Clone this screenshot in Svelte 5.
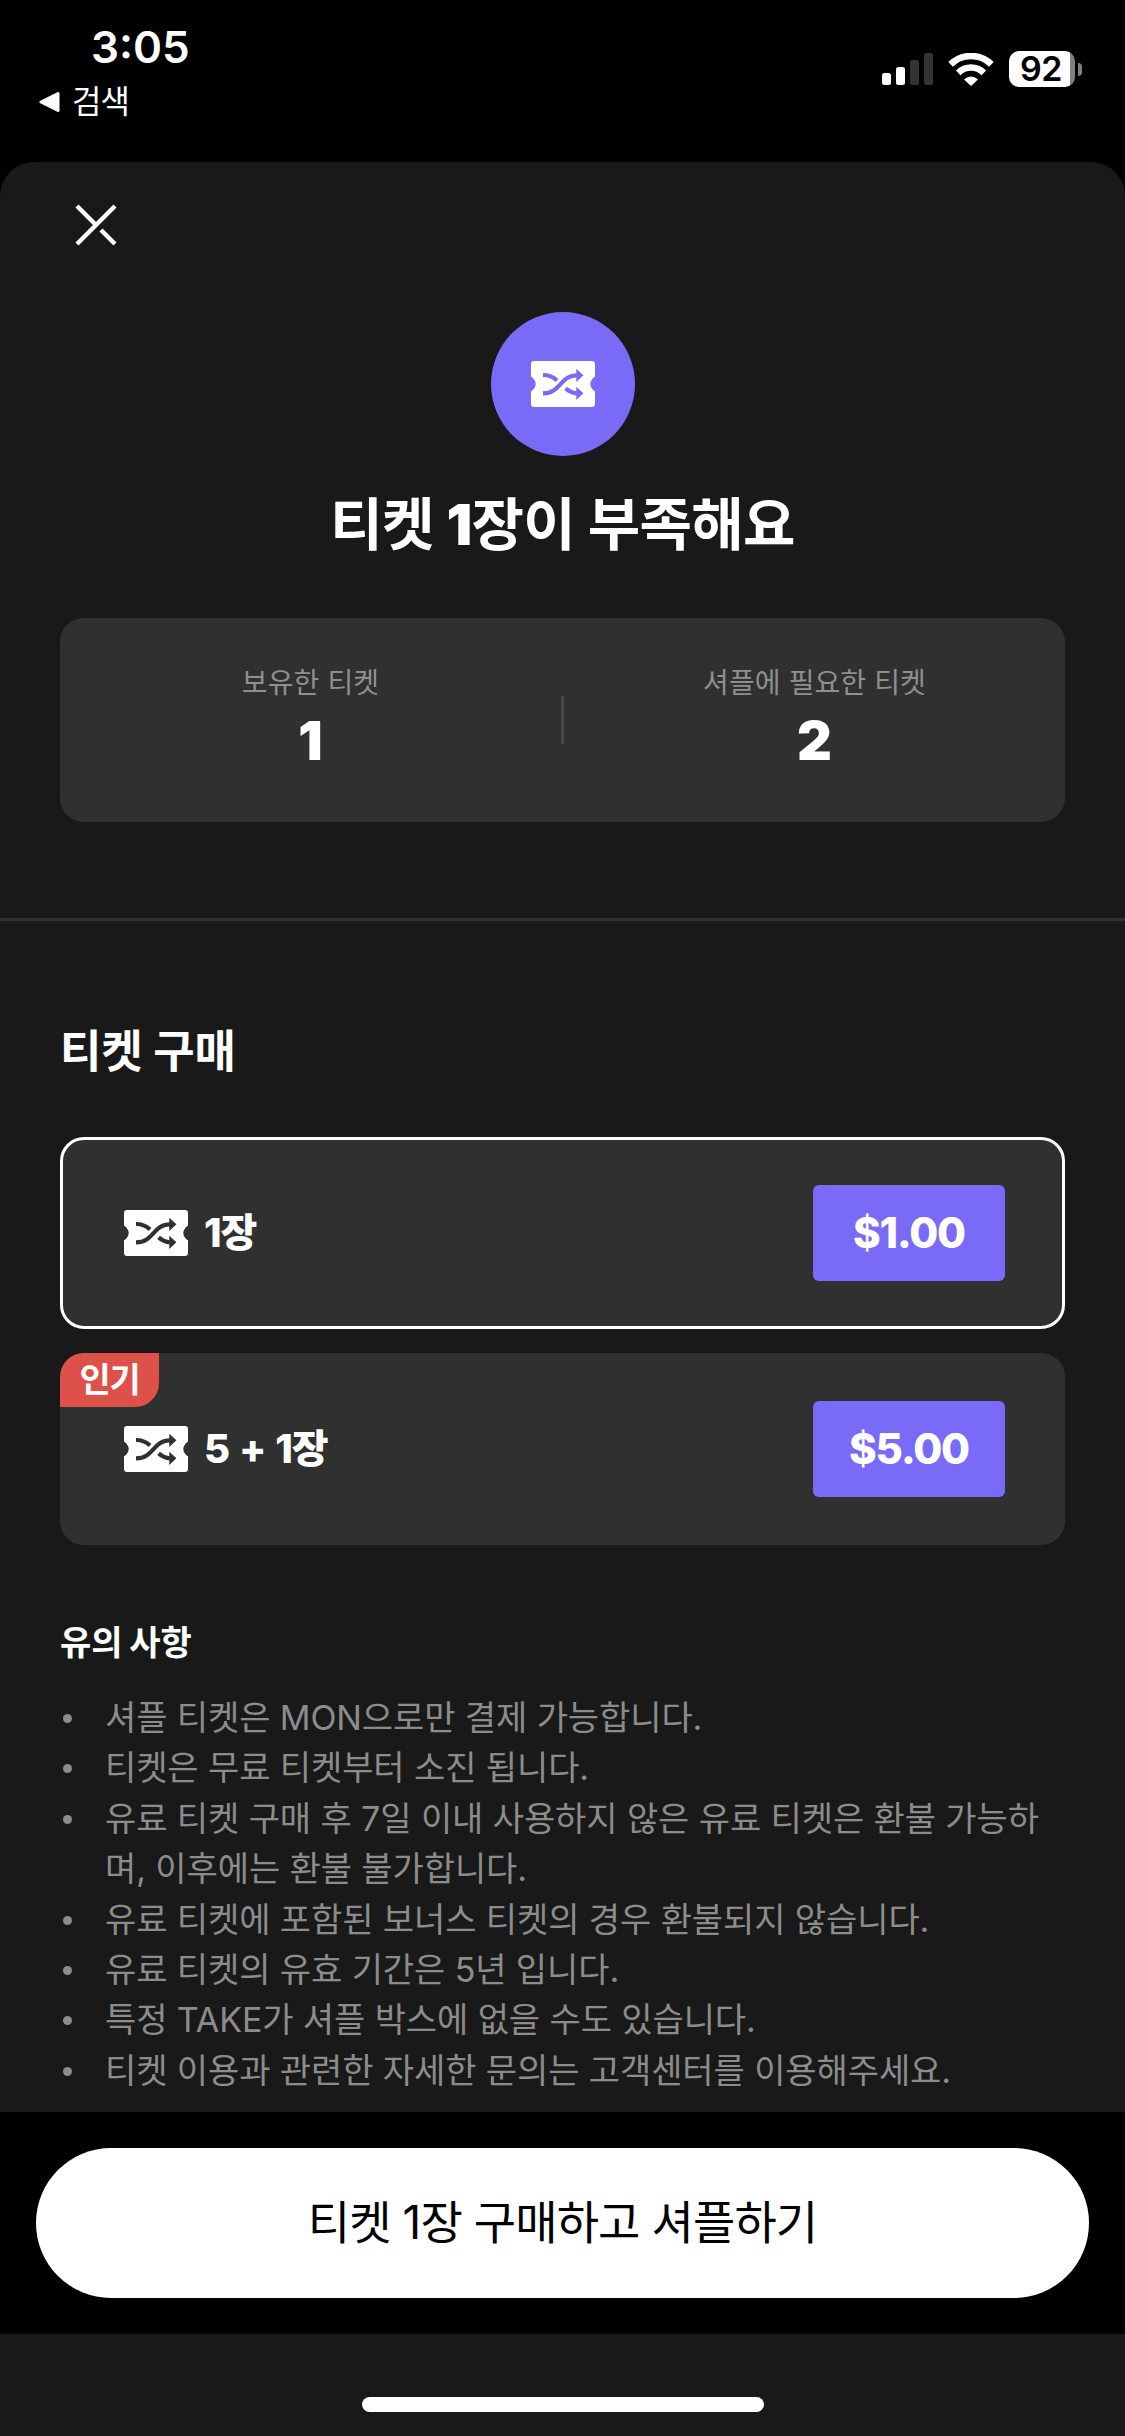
<script lang="ts">
	type Option = { id: number; label: string; price: string; popular?: boolean };

	const options: Option[] = [
		{ id: 1, label: '1장', price: '$1.00' },
		{ id: 2, label: '5 + 1장', price: '$5.00', popular: true }
	];

	const notices = [
		'셔플 티켓은 MON으로만 결제 가능합니다.',
		'티켓은 무료 티켓부터 소진 됩니다.',
		'유료 티켓 구매 후 7일 이내 사용하지 않은 유료 티켓은 환불 가능하며, 이후에는 환불 불가합니다.',
		'유료 티켓에 포함된 보너스 티켓의 경우 환불되지 않습니다.',
		'유료 티켓의 유효 기간은 5년 입니다.',
		'특정 TAKE가 셔플 박스에 없을 수도 있습니다.',
		'티켓 이용과 관련한 자세한 문의는 고객센터를 이용해주세요.'
	];

	let owned = $state(1);
	let required = $state(2);
	let selected = $state(1);
	let missing = $derived(required - owned);
	let selectedLabel = $derived(options.find((o) => o.id === selected)?.label ?? '');
</script>

{#snippet ticket()}
	<svg class="ticket" viewBox="0 0 64 46">
		<path
			class="ticket-body"
			d="M3 0H61Q64 0 64 3V15.5Q59.3 19 59.3 23T64 30.5V43Q64 46 61 46H3Q0 46 0 43V30.5Q4.7 27 4.7 23T0 15.5V3Q0 0 3 0Z"
		/>
		<path
			class="ticket-line"
			d="M12 14C18 14 22 15.8 26 19.4M12 32.3C30 32.3 29 14.3 46 14.3M34.6 27.4C38 30.4 41 32 46 32.4"
		/>
		<path class="ticket-arrow" d="M45.3 7.7L52.4 14.3L45.3 20.9ZM45.3 25.7L52.4 32.3L45.3 39Z" />
	</svg>
{/snippet}

<div class="screen">
	<header class="status">
		<div class="status-left">
			<div class="time">3:05</div>
			<div class="back">
				<svg width="21" height="22" viewBox="0 0 21 22">
					<path d="M2 11L19 2.5V19.5Z" fill="#fff" stroke="#fff" stroke-width="3" stroke-linejoin="round" />
				</svg>
				<span>검색</span>
			</div>
		</div>
		<div class="status-right">
			<svg width="51" height="32" viewBox="0 0 51 32">
				<rect x="0" y="20" width="9" height="12" rx="2.5" fill="#fff" />
				<rect x="14" y="14" width="9" height="18" rx="2.5" fill="#fff" />
				<rect x="28" y="7" width="9" height="25" rx="2.5" fill="#333" />
				<rect x="42" y="0" width="9" height="32" rx="2.5" fill="#333" />
			</svg>
			<svg class="wifi" width="46" height="33" viewBox="0 0 46 33">
				<path d="M2.6 11.4A29 29 0 0 1 43.4 11.4" />
				<path d="M10.2 19.8A18.2 18.2 0 0 1 35.8 19.8" />
				<path class="wifi-dot" d="M16 26.4Q23 20.6 30 26.4L23 33Z" />
			</svg>
			<div class="battery">
				<div class="battery-body">92</div>
				<div class="battery-cap"></div>
			</div>
		</div>
	</header>

	<main class="sheet">
		<button class="close" aria-label="닫기">
			<svg width="42" height="42" viewBox="0 0 42 42">
				<path d="M2 40L40 2M2 2L21 21M26 26L40 40" stroke="#fff" stroke-width="4.4" />
			</svg>
		</button>

		<section class="hero">
			<div class="hero-icon">{@render ticket()}</div>
			<h1>티켓 <b>{missing}</b>장이 부족해요</h1>
			<div class="summary">
				<div class="summary-item">
					<span class="summary-label">보유한 티켓</span>
					<span class="summary-count">{owned}</span>
				</div>
				<div class="summary-divider"></div>
				<div class="summary-item">
					<span class="summary-label">셔플에 필요한 티켓</span>
					<span class="summary-count">{required}</span>
				</div>
			</div>
		</section>

		<section class="purchase">
			<h2>티켓 구매</h2>
			<div class="options">
				{#each options as option (option.id)}
					<button
						class="option"
						class:selected={option.id === selected}
						onclick={() => (selected = option.id)}
					>
						{#if option.popular}
							<span class="badge">인기</span>
						{/if}
						{@render ticket()}
						<span class="option-label">{option.label}</span>
						<span class="price">{option.price}</span>
					</button>
				{/each}
			</div>
		</section>

		<section class="notice">
			<h3>유의 사항</h3>
			<ul>
				{#each notices as notice}
					<li>{notice}</li>
				{/each}
			</ul>
		</section>
	</main>

	<div class="cta-bar">
		<button class="cta">티켓 {selectedLabel} 구매하고 셔플하기</button>
	</div>
	<footer class="home">
		<div class="home-indicator"></div>
	</footer>
</div>

<style>
	:global(body) {
		margin: 0;
		background: #000;
	}

	.screen {
		width: 1125px;
		height: 2436px;
		display: flex;
		flex-direction: column;
		overflow: hidden;
		background: #000;
		color: #fff;
		font-family: Inter, 'Noto Sans CJK KR', sans-serif;
	}

	button {
		padding: 0;
		border: 0;
		background: none;
		color: inherit;
		font: inherit;
	}

	svg {
		display: block;
		flex: none;
	}

	h1,
	h2,
	h3,
	ul {
		margin: 0;
		padding: 0;
	}

	/* Status bar */
	.status {
		height: 162px;
		flex: none;
		box-sizing: border-box;
		padding: 20px 43px 0 39px;
		display: flex;
		justify-content: space-between;
		align-items: flex-start;
	}

	.time {
		padding-left: 52px;
		font-size: 44px;
		font-weight: 600;
		line-height: 54px;
	}

	.back {
		display: flex;
		align-items: center;
		gap: 12px;
		margin-top: 8px;
		font-size: 32px;
		line-height: 40px;
		letter-spacing: -1px;
	}

	.status-right {
		display: flex;
		align-items: center;
		margin-top: 31px;
	}

	.wifi {
		margin: 0 15px;
		fill: none;
		stroke: #fff;
		stroke-width: 6.6;
	}

	.wifi .wifi-dot {
		fill: #fff;
		stroke: none;
	}

	.battery {
		display: flex;
		align-items: center;
		gap: 3px;
	}

	.battery-body {
		width: 66px;
		height: 36px;
		box-sizing: border-box;
		padding-right: 2px;
		border-radius: 10px;
		background: linear-gradient(to right, #fff 61px, #808080 61px);
		color: #000;
		font-size: 34px;
		font-weight: 600;
		line-height: 36px;
		letter-spacing: -0.5px;
		text-align: center;
	}

	.battery-cap {
		width: 4px;
		height: 13px;
		border-radius: 0 6px 6px 0;
		background: #808080;
	}

	/* Sheet */
	.sheet {
		height: 1950px;
		flex: none;
		border-radius: 34px 34px 0 0;
		background: #191919;
		overflow: hidden;
	}

	.close {
		display: block;
		margin: 42px 0 0 75px;
	}

	.hero {
		display: flex;
		flex-direction: column;
		align-items: center;
		padding: 66px 60px 96px;
		border-bottom: 3px solid #303030;
	}

	.hero-icon {
		width: 144px;
		height: 144px;
		border-radius: 50%;
		background: #796af7;
		display: flex;
		align-items: center;
		justify-content: center;
		--cut: #796af7;
	}

	.ticket {
		width: 64px;
		height: 46px;
	}

	.ticket-body {
		fill: #fff;
	}

	.ticket-line {
		fill: none;
		stroke: var(--cut);
		stroke-width: 4.2;
	}

	.ticket-arrow {
		fill: var(--cut);
	}

	h1 {
		margin-top: 33px;
		font-size: 57px;
		font-weight: 700;
		line-height: 72px;
		letter-spacing: -0.7px;
	}

	h1 b {
		font-weight: 900;
	}

	.summary {
		width: 100%;
		height: 204px;
		margin-top: 57px;
		border-radius: 24px;
		background: #303030;
		display: flex;
		align-items: center;
	}

	.summary-item {
		flex: 1;
		display: flex;
		flex-direction: column;
		align-items: center;
		margin-top: -2px;
	}

	.summary-label {
		color: #8f8f8f;
		font-size: 28px;
		line-height: 44px;
		letter-spacing: 0.1px;
	}

	.summary-count {
		font-size: 54px;
		font-weight: 900;
		line-height: 72px;
	}

	.summary-divider {
		width: 3px;
		height: 48px;
		background: #474747;
	}

	/* Purchase options */
	.purchase {
		padding: 101px 60px 0;
	}

	h2 {
		font-size: 45px;
		font-weight: 700;
		line-height: 60px;
		letter-spacing: -0.1px;
	}

	.options {
		display: flex;
		flex-direction: column;
		gap: 24px;
		margin-top: 55px;
	}

	.option {
		position: relative;
		height: 192px;
		box-sizing: border-box;
		padding: 0 57px 0 61px;
		border: 3px solid #303030;
		border-radius: 24px;
		background: #303030;
		display: flex;
		align-items: center;
		--cut: #303030;
	}

	.option.selected {
		border-color: #fff;
	}

	.option-label {
		margin-left: 16px;
		font-size: 40px;
		font-weight: 800;
		line-height: 48px;
		letter-spacing: -1.2px;
		word-spacing: 2.5px;
	}

	.price {
		width: 192px;
		height: 96px;
		margin-left: auto;
		border-radius: 6px;
		background: #796af7;
		font-size: 42px;
		font-weight: 800;
		line-height: 95px;
		letter-spacing: -1.2px;
		text-align: center;
	}

	.badge {
		position: absolute;
		top: -3px;
		left: -3px;
		width: 99px;
		height: 54px;
		border-radius: 24px 0;
		background: #de504a;
		font-size: 34px;
		font-weight: 600;
		line-height: 54px;
		letter-spacing: -1.2px;
		text-align: center;
	}

	/* Notice */
	.notice {
		padding: 71px 60px 0;
	}

	h3 {
		font-size: 34px;
		font-weight: 700;
		line-height: 54px;
		letter-spacing: -0.1px;
		word-spacing: -1px;
	}

	ul {
		margin-top: 23px;
		list-style: none;
		color: #8c8c8c;
		font-size: 34px;
		line-height: 50.4px;
		letter-spacing: -0.1px;
		word-break: break-all;
	}

	li {
		display: flex;
	}

	li::before {
		content: '';
		flex: none;
		width: 9px;
		height: 9px;
		margin: 21px 33px 0 3px;
		border-radius: 50%;
		background: #8c8c8c;
	}

	/* Bottom */
	.cta-bar {
		height: 222px;
		flex: none;
		box-sizing: border-box;
		padding: 36px;
	}

	.cta {
		width: 100%;
		height: 150px;
		padding-bottom: 3px;
		border-radius: 75px;
		background: #fff;
		color: #000;
		font-size: 46px;
		line-height: 60px;
		letter-spacing: -0.9px;
	}

	.home {
		flex: 1;
		padding-top: 63px;
		background: #191919;
	}

	.home-indicator {
		width: 402px;
		height: 15px;
		margin: 0 auto;
		border-radius: 8px;
		background: #fff;
	}
</style>
